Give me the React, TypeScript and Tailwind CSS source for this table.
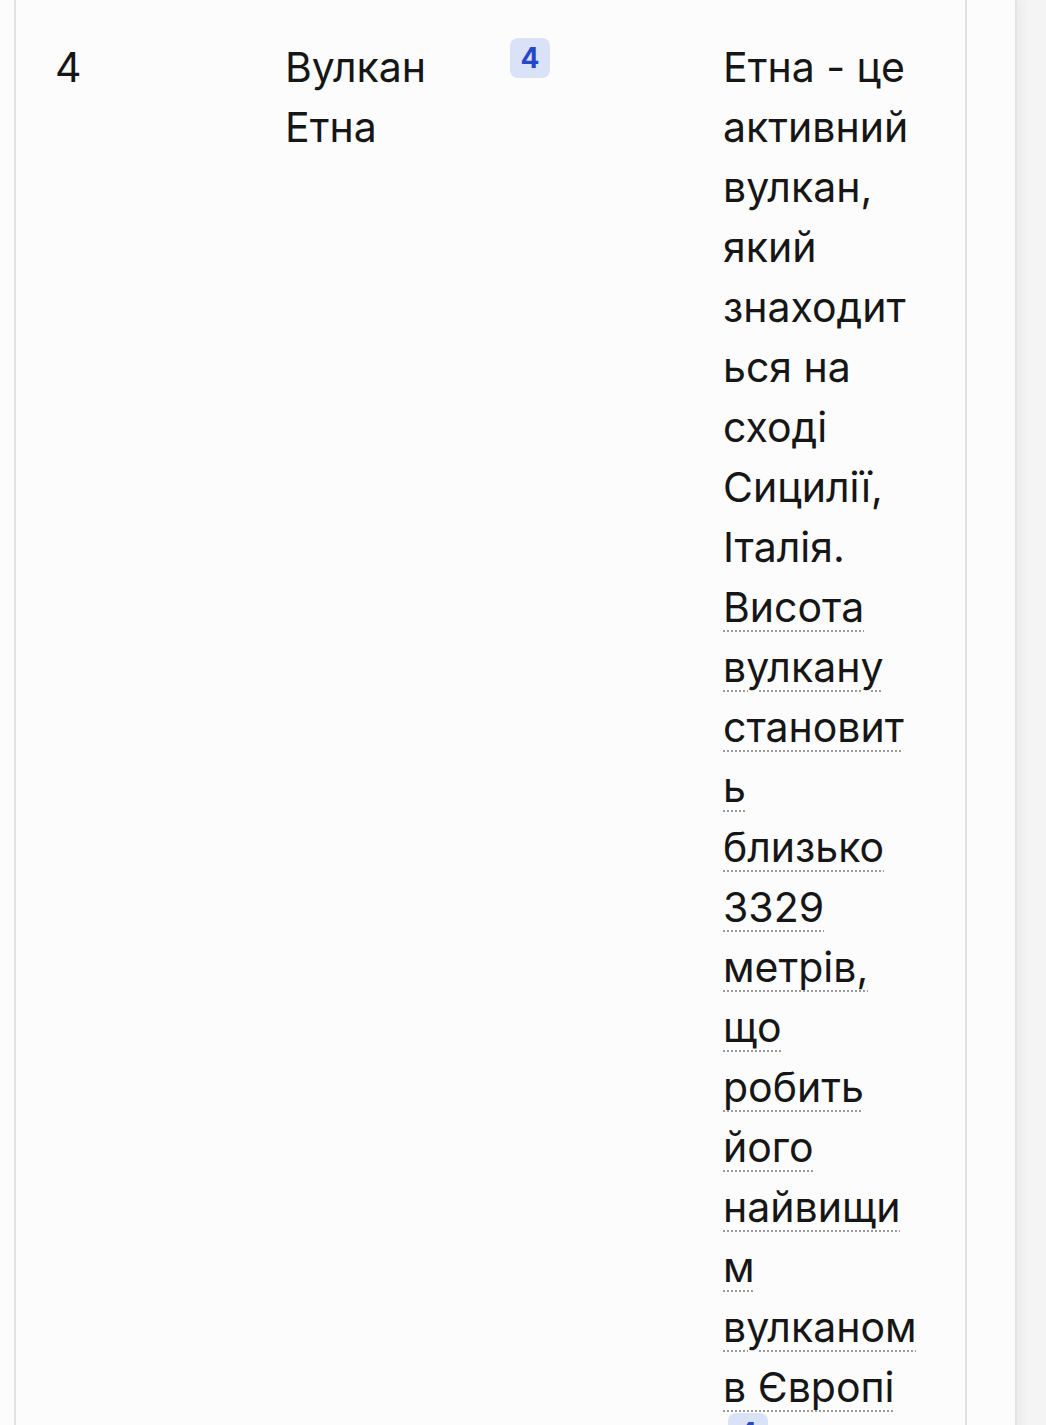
import type { FC } from "react";

const Badge: FC<{ n: string; className?: string }> = ({ n, className = "" }) => (
  <span
    className={
      "h-[40px] min-w-[40px] items-center justify-center rounded-[8px] bg-[#dae2f8] px-[10px] text-[28px] font-bold leading-none text-[#2548c9] " +
      className
    }
  >
    {n}
  </span>
);

const Cite: FC<{ children: string }> = ({ children }) => (
  <span className="underline decoration-[#9b9b9b] decoration-dotted decoration-2 underline-offset-[8px]">
    {children}
  </span>
);

const App: FC = () => {
  return (
    <div
      className="min-h-screen bg-[#f4f4f4] text-[#161616]"
      style={{ fontFamily: "Inter, 'Noto Sans', 'DejaVu Sans', sans-serif" }}
    >
      <div className="min-h-screen w-[1017px] border-r-2 border-[#e4e4e4] bg-[#fcfcfc] pl-[14px] pr-[48px] shadow-[3px_0_10px_rgba(0,0,0,0.05)]">
        <div className="min-h-screen border-x-2 border-[#e2e2e2]">
          <div className="grid grid-cols-[230px_225px_213px_281px] text-[41px] leading-[60px]">
            <div className="pl-[39px] pt-[37px]">4</div>
            <div className="pl-[39px] pt-[37px]">Вулкан Етна</div>
            <div className="pl-[39px] pt-[38px]">
              <Badge n="4" className="flex w-fit" />
            </div>
            <div className="min-w-0 [overflow-wrap:anywhere] pl-[39px] pr-[47px] pt-[37px] pb-[60px]">
              Етна - це активний вулкан, який знаходиться на сході Сицилії, Італія.{" "}
              <Cite>Висота вулкану становить близько 3329 метрів, що робить його найвищим вулканом в Європі</Cite>
              <Badge n="4" className="ml-[5px] mt-[-4px] inline-flex align-top" />
            </div>
          </div>
        </div>
      </div>
    </div>
  );
};

export default App;
